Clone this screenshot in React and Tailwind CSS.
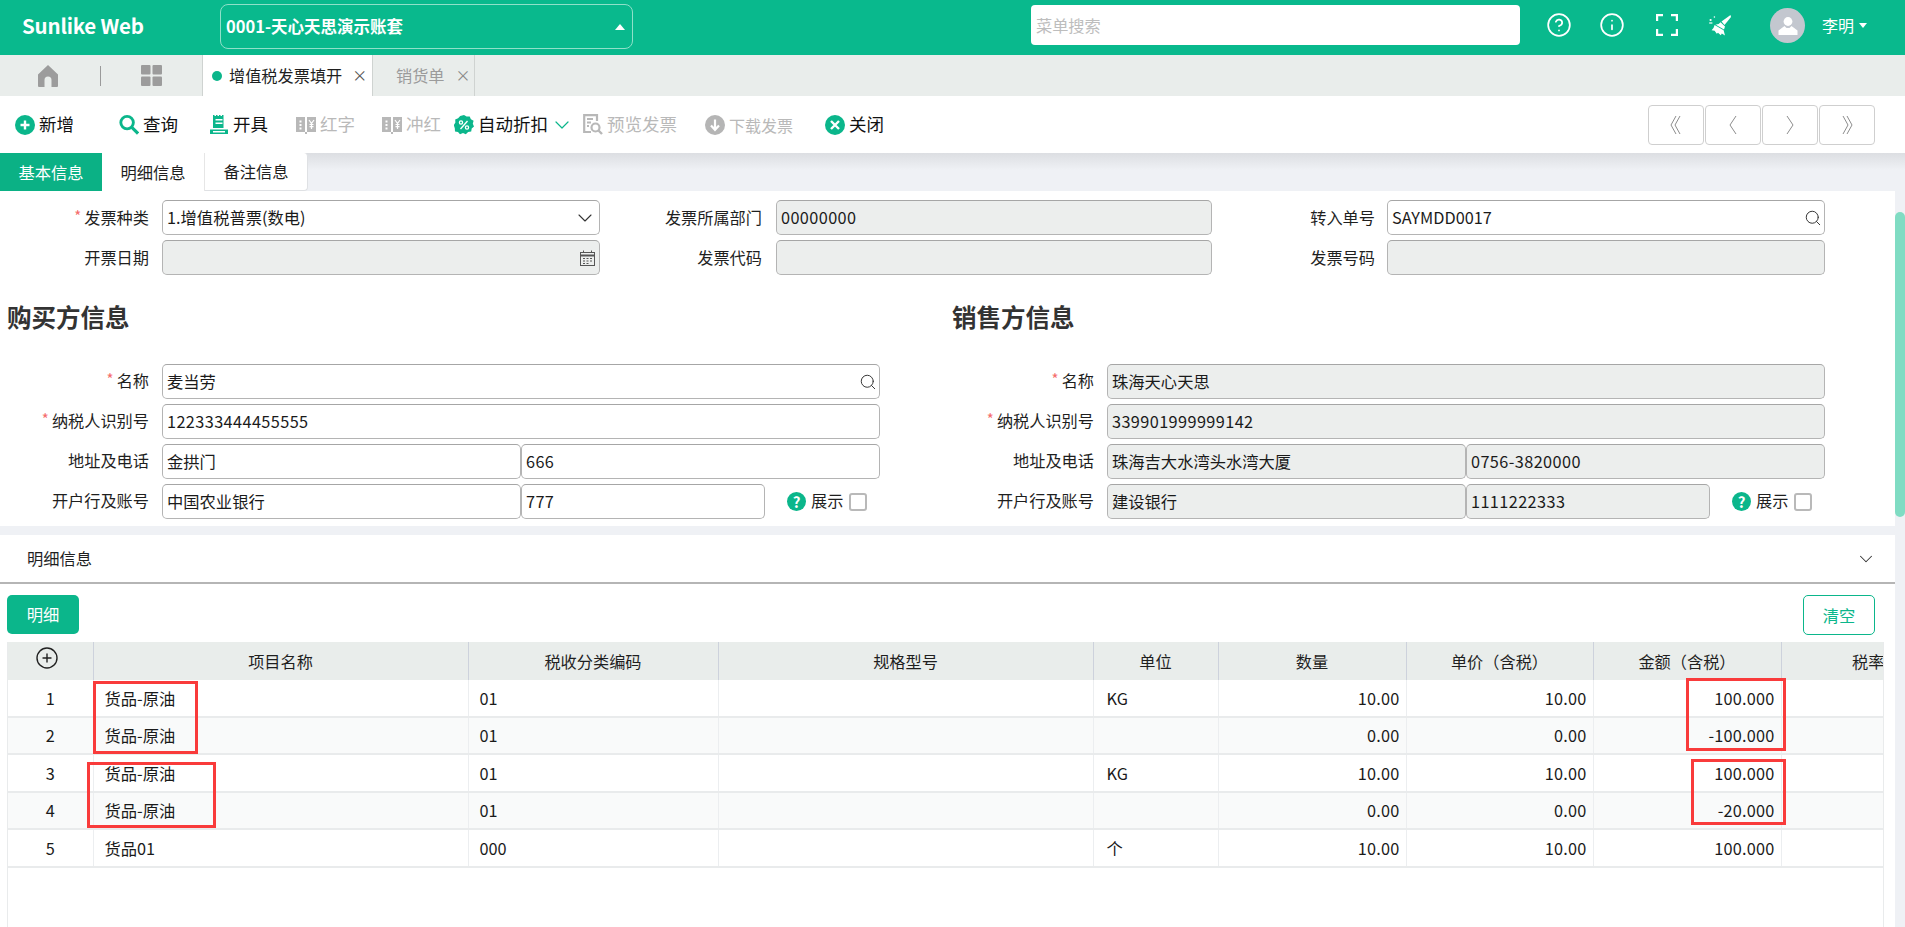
import React from "react";
import { ChevronDown, CirclePlus, Search, CircleHelp, Info } from "lucide-react";

const Home = () => (
  <svg width="20" height="22" viewBox="0 0 20 22" className="text-[#9c9c9c]"><path fill="currentColor" d="M10 0 L20 9.5 V21 a1 1 0 0 1-1 1 H13.5 V15 a3.5 3.5 0 0 0-7 0 V22 H1 a1 1 0 0 1-1-1 V9.5 Z" /></svg>
);
const Grid = () => (
  <svg width="21" height="21" viewBox="0 0 21 21" fill="#9c9c9c"><rect width="9.5" height="9.5" rx="1" /><rect x="11.5" width="9.5" height="9.5" rx="1" /><rect y="11.5" width="9.5" height="9.5" rx="1" /><rect x="11.5" y="11.5" width="9.5" height="9.5" rx="1" /></svg>
);
const Broom = () => (
  <svg width="23" height="22" viewBox="0 0 22 22" fill="white">
    <path d="M21.5 1 L12.5 7.6 L15.5 11 L22 3 Z" />
    <path d="M11.6 8.2 L16 12.6 L15 15.4 L6.4 10.4 Q9.5 10.8 11.6 8.2 Z" />
    <path d="M5.6 11 L14.6 16.2 L16 21.6 L12.8 19.6 L11.8 21.2 L9 18.8 L7.8 19.8 L5.6 16.8 L2.6 16.2 Q5 14.2 5.6 11 Z" />
    <circle cx="1.6" cy="6" r="1.1" /><circle cx="5.4" cy="3" r="0.8" /><path d="M0.2 8.4 h3.2 v1.2 h-3.2z" />
  </svg>
);
const Avatar = () => (
  <div className="w-[35px] h-[35px] rounded-full bg-[#c3c7cf] flex items-center justify-center">
    <svg width="20" height="20" viewBox="0 0 20 20" fill="white"><circle cx="10" cy="5.5" r="4.4" /><path d="M6.5 10 L8.5 12 H11.5 L13.5 10 L19.5 14.5 V19 H0.5 V14.5 Z" /></svg>
  </div>
);
const FillCircle = ({ color = "#0bb68b", children }) => (
  <svg width="20" height="20" viewBox="0 0 20 20"><circle cx="10" cy="10" r="10" fill={color} />{children}</svg>
);
const Plus = () => <FillCircle><path d="M10 5.5 V14.5 M5.5 10 H14.5" stroke="white" strokeWidth="2.4" /></FillCircle>;
const Close = () => <FillCircle><path d="M6 6 L14 14 M14 6 L6 14" stroke="white" strokeWidth="2.4" /></FillCircle>;
const Down = () => <FillCircle color="#b5b5b5"><path d="M10 4.5 V14.5 M6 10.5 L10 14.8 L14 10.5" stroke="white" strokeWidth="2.2" fill="none" /></FillCircle>;
const Find = () => (
  <svg width="21" height="21" viewBox="0 0 21 21" fill="none" stroke="#0bb68b"><circle cx="8.5" cy="8.5" r="6.6" strokeWidth="3" /><path d="M13.5 13.5 L20 20" strokeWidth="3.2" /></svg>
);
const Issue = () => (
  <svg width="18" height="19" viewBox="0 0 18 19" fill="#0bb68b">
    <path fillRule="evenodd" d="M3 0 h1.5 v1 h1.5 v-1 h1.5 v1 h1.5 v-1 h1.5 v1 h1.5 v-1 h1.5 V13 H3 Z M5.5 4 v1.4 h7 V4 Z M5.5 7.5 v1.4 h7 V7.5 Z" />
    <path d="M0 14.5 H18 V19 H0 Z M3 16 v1.4 h12 V16 Z" fillRule="evenodd" />
  </svg>
);
const Book = () => (
  <svg width="20" height="18" viewBox="0 0 20 18" fill="#b8b8b8">
    <path fillRule="evenodd" d="M0 1 H9 V16 H0 Z M3.5 4.5 v2 h2 v-2 Z M3.5 8 v2 h2 v-2 Z M3.5 11.5 v2 h2 v-2 Z" />
    <path d="M11 1 H20 V16 H11 Z" />
    <path d="M13 4 L15.5 7.5 L18 4 M15.5 7.5 V13 M13.5 8.5 H17.5 M13.5 10.7 H17.5" stroke="white" strokeWidth="1.2" fill="none" />
    <path d="M9 16 H11 V18 H9 Z" />
  </svg>
);
const Discount = () => (
  <svg width="20" height="20" viewBox="0 0 20 20">
    <path fill="#0bb68b" d="M10 0 L12.6 1.6 L15.7 1.4 L16.9 4.2 L19.6 5.7 L18.8 8.7 L20 11.5 L17.7 13.5 L17.2 16.6 L14.1 17 L11.8 19.2 L9 18 L6 19.2 L4 16.9 L1 16.4 L0.8 13.3 L-0.2 10 L1.4 7.4 L1.2 4.4 L4.1 3.3 L6.2 1 Z" />
    <circle cx="7" cy="7.5" r="1.6" fill="none" stroke="white" strokeWidth="1.3" /><circle cx="13" cy="12.5" r="1.6" fill="none" stroke="white" strokeWidth="1.3" />
    <path d="M13.5 6 L6.5 14" stroke="white" strokeWidth="1.4" />
  </svg>
);
const Preview = () => (
  <svg width="20" height="21" viewBox="0 0 20 21" fill="none" stroke="#b8b8b8">
    <path d="M8 18 H1.2 V1.2 H14 V7" strokeWidth="2.2" />
    <path d="M4 5 H10 M4 8.5 H8 M4 12 H6" strokeWidth="1.8" />
    <circle cx="12.5" cy="13.5" r="4" strokeWidth="2.2" /><path d="M15.5 16.5 L19 20" strokeWidth="2.4" />
  </svg>
);
const Cal = () => (
  <svg width="15" height="16" viewBox="0 0 15 16" fill="none" stroke="#555" className="mr-[3px]">
    <rect x="0.5" y="2.5" width="14" height="13" />
    <path d="M0.5 5.5 H14.5" strokeWidth="2" />
    <path d="M3.5 0.5 V3 M11.5 0.5 V3" />
    <path d="M3 8.5 H5 M6.5 8.5 H8.5 M10 8.5 H12 M3 11 H5 M6.5 11 H8.5 M10 11 H12 M3 13.5 H5 M6.5 13.5 H8.5" strokeWidth="1.2" />
  </svg>
);
const PageIcon = ({ d }) => (
  <svg width="14" height="20" viewBox="0 0 14 20" fill="none" stroke="#8d8d8d" strokeWidth="1"><path d={d} /></svg>
);

const Tool = ({ icon, label, className = "", disabled, text = "text-[17.5px]" }) => (
  <div className={`flex items-center gap-[4px] shrink-0 ${text} ${disabled ? "text-[#b9b9b9]" : "text-[#111]"} ${className}`}>
    <span className="flex w-[20px] justify-center">{icon}</span>
    <span>{label}</span>
  </div>
);

const Pager = ({ children }) => (
  <div className="w-[56px] h-[40px] rounded-[4px] border border-[#cfcfcf] flex items-center justify-center">{children}</div>
);

const Label = ({ children, req, w, pad = "pb-[2px]" }) => (
  <div className={`${w} h-full ${pad} flex items-center justify-end text-[16.2px] text-[#1f1f1f] shrink-0 whitespace-nowrap`}>
    {req && <span className="text-[#f56c6c] mr-[3px] text-[15px] relative top-[-1px]">*</span>}
    {children}
  </div>
);

const Input = ({ children, w, off, icon, pad = "pb-[1px]", className = "" }) => {
  const numeric = typeof children === "string" && /^[\d-]+$/.test(children);
  return (
    <div className={`${w} h-full shrink-0 rounded-[5px] border border-[#b4b4b4] border-t-[#a6a6a6] flex items-center justify-between pl-[4px] pr-[1px] text-[16.3px] text-[#1a1a1a] ${off ? "bg-[#eceeed]" : "bg-white"} ${className}`}>
      <span className={`whitespace-nowrap ${pad} ${numeric ? "tracking-[0.4px]" : ""}`}>{children}</span>
      {icon}
    </div>
  );
};

const Q = <Search size={18} strokeWidth={1.3} className="text-[#333] mr-[1px]" />;

const Party = ({ off, labelW, vals }) => (
  <div className="flex flex-col gap-[5px]">
    <div className="flex h-[35px]"><Label w={labelW} req>名称</Label><Input w="w-[718px] ml-[13px]" off={off} icon={off ? null : Q}>{vals[0]}</Input></div>
    <div className="flex h-[35px]"><Label w={labelW} req>纳税人识别号</Label><Input w="w-[718px] ml-[13px]" off={off}>{vals[1]}</Input></div>
    <div className="flex h-[35px]"><Label w={labelW}>地址及电话</Label><Input w="w-[359px] ml-[13px]" off={off}>{vals[2]}</Input><Input w="w-[359px]" off={off}>{vals[3]}</Input></div>
    <div className="flex h-[35px]">
      <Label w={labelW}>开户行及账号</Label><Input w="w-[359px] ml-[13px]" off={off}>{vals[4]}</Input><Input w="w-[244px]" off={off}>{vals[5]}</Input>
      <div className="ml-[22px] flex items-center text-[16.2px] text-[#1f1f1f]">
        <span className="w-[19px] h-[19px] rounded-full bg-[#0bb68b] text-white text-[15px] font-bold leading-[19px] text-center mr-[5px]">?</span>
        <span className="pb-[2px]">展示</span>
        <span className="ml-[6px] w-[18px] h-[18px] rounded-[3px] border-2 border-[#b9b9b9] bg-white" />
      </div>
    </div>
  </div>
);

const rows = [
  { n: 1, name: "货品-原油", code: "01", unit: "KG", q: "10.00", p: "10.00", a: "100.000", h: "h-[37px]" },
  { n: 2, name: "货品-原油", code: "01", unit: "", q: "0.00", p: "0.00", a: "-100.000", h: "h-[37px]", alt: true },
  { n: 3, name: "货品-原油", code: "01", unit: "KG", q: "10.00", p: "10.00", a: "100.000", h: "h-[38px]" },
  { n: 4, name: "货品-原油", code: "01", unit: "", q: "0.00", p: "0.00", a: "-20.000", h: "h-[37px]", alt: true },
  { n: 5, name: "货品01", code: "000", unit: "个", q: "10.00", p: "10.00", a: "100.000", h: "h-[38px]" },
];

const Th = ({ children }) => <th className="border-r border-[#cdd2dc] font-normal text-[16.2px] text-[#1f1f1f] text-center last:border-r-0 whitespace-nowrap overflow-hidden">{children}</th>;
const Td = ({ children, right, center, pl = "pl-[11px]" }) => (
  <td className={`border-r border-b-2 border-r-[#eceef0] border-b-[#e9ebec] text-[16.3px] text-[#1a1a1a] whitespace-nowrap ${right ? "text-right pr-[6px] tracking-[0.2px]" : center ? "text-center" : `text-left ${pl}`}`}>{children}</td>
);

const Mark = ({ className }) => <div className={`absolute border-[3px] border-[#f93b3b] pointer-events-none ${className}`} />;

export default function App() {
  return (
    <div className="relative w-[1905px] h-[927px] overflow-hidden flex flex-col bg-[#eff1f5] font-['Noto_Sans_CJK_SC','Noto_Sans',sans-serif]">
      {/* header */}
      <header className="h-[55px] shrink-0 bg-[#09b98d] flex items-center pb-[5px] text-white">
        <div className="w-[220px] pl-[22px] text-[20.5px] font-bold tracking-[-0.2px] pt-[1px]">Sunlike Web</div>
        <div className="w-[413px] h-[45px] mt-[3px] rounded-[8px] border border-[#8fe0c9] flex items-center justify-between pl-[5px] pr-[7px] text-[16.5px] font-bold">
          <span>0001-天心天思演示账套</span>
          <span className="w-0 h-0 border-x-[5px] border-x-transparent border-b-[6px] border-b-white" />
        </div>
        <div className="ml-[398px] w-[489px] h-[40px] bg-white rounded-[4px] flex items-center pl-[5px] text-[16.2px] text-[#bdbdbd]">菜单搜索</div>
        <div className="ml-[28px] w-[22px] flex justify-center"><CircleHelp size={26} strokeWidth={1.6} className="shrink-0" /></div>
        <div className="ml-[31px] w-[22px] flex justify-center"><Info size={26} strokeWidth={1.6} className="shrink-0" /></div>
        <div className="ml-[33px] w-[22px] flex justify-center">
          <svg width="22" height="22" viewBox="0 0 22 22" fill="none" stroke="white" strokeWidth="2.2"><path d="M1.1 7 V1.1 H7 M15 1.1 H20.9 V7 M20.9 15 V20.9 H15 M7 20.9 H1.1 V15" /></svg>
        </div>
        <div className="ml-[31px] w-[22px] flex justify-center"><Broom /></div>
        <div className="ml-[39px] mt-[1px]"><Avatar /></div>
        <div className="ml-[17px] text-[16px]">李明</div>
        <span className="ml-[5px] w-0 h-0 border-x-[4px] border-x-transparent border-t-[5px] border-t-white" />
      </header>

      {/* page tabs */}
      <div className="h-[41px] shrink-0 bg-[#e9edeb] flex items-stretch">
        <div className="w-[100px] flex items-center justify-center pr-[4px]"><Home /></div>
        <div className="w-px h-[20px] bg-[#9a9a9a] self-center" />
        <div className="w-[101px] flex items-center justify-center"><Grid /></div>
        <div className="w-[170px] bg-white border-l border-[#cfd3d1] flex items-center pl-[9px] text-[16.2px] text-[#1f1f1f]">
          <span className="w-[10px] h-[10px] rounded-full bg-[#0bb68b] mr-[7px]" />增值税发票填开
          <span className="ml-[10px] text-[15px] text-[#555]">×</span>
        </div>
        <div className="w-[103px] border-x border-[#cfd3d1] flex items-center pl-[23px] text-[16.2px] text-[#9b9b9b]">
          销货单<span className="ml-[11px] text-[15px] text-[#888]">×</span>
        </div>
      </div>

      {/* toolbar */}
      <div className="h-[57px] shrink-0 bg-white flex items-center pl-[15px]">
        <Tool icon={<Plus />} label="新增" />
        <Tool icon={<Find />} label="查询" className="ml-[45px]" />
        <Tool icon={<Issue />} label="开具" className="ml-[31px]" />
        <Tool icon={<Book />} label="红字" className="ml-[28px]" disabled />
        <Tool icon={<Book />} label="冲红" className="ml-[27px]" disabled />
        <Tool icon={<Discount />} label="自动折扣" className="ml-[13px]" />
        <ChevronDown size={24} strokeWidth={1.2} className="text-[#0bb68b] ml-[2px] shrink-0" />
        <Tool icon={<Preview />} label="预览发票" className="ml-[9px]" disabled />
        <Tool icon={<Down />} label="下载发票" className="ml-[28px]" disabled text="text-[16px]" />
        <Tool icon={<Close />} label="关闭" className="ml-[32px]" />
        <div className="ml-auto mr-[30px] flex gap-px">
          <Pager><PageIcon d="M7 1 L2 10 L7 19 M11 1 L6 10 L11 19" /></Pager>
          <Pager><PageIcon d="M10 1 L4 10 L10 19" /></Pager>
          <Pager><PageIcon d="M4 1 L10 10 L4 19" /></Pager>
          <Pager><PageIcon d="M3 1 L8 10 L3 19 M7 1 L12 10 L7 19" /></Pager>
        </div>
      </div>

      {/* form tabs */}
      <div className="h-[38px] shrink-0 flex bg-[linear-gradient(#dcdee2,#eff1f5_45%)]">
        <div className="w-[102px] bg-[#0bb185] text-white flex items-center justify-center text-[16.3px]">基本信息</div>
        <div className="w-[103px] bg-white border-r border-[#e6e6e6] flex items-center justify-center text-[16.3px] text-[#1f1f1f]">明细信息</div>
        <div className="w-[103px] bg-white rounded-br-[4px] rounded-tr-[4px] border-r border-b border-[#dfe1e4] flex items-center justify-center text-[16.3px] text-[#1f1f1f]">备注信息</div>
      </div>

      <div className="flex-1 min-h-0 flex">
        <div className="w-[1895px] flex flex-col">
          {/* upper form */}
          <section className="h-[335px] shrink-0 bg-white pt-[9px]">
            <div className="flex flex-col gap-[5px]">
              <div className="flex h-[35px]">
                <Label w="w-[149px]" req pad="pb-0">发票种类</Label>
                <Input w="w-[438px] ml-[13px]" pad="pb-0" icon={<ChevronDown size={24} strokeWidth={1.1} className="text-[#333] mr-[1px]" />}>1.增值税普票(数电)</Input>
                <Label w="w-[162px]" pad="pb-0">发票所属部门</Label>
                <Input w="w-[436px] ml-[14px]" off pad="pb-0">00000000</Input>
                <Label w="w-[163px]" pad="pb-0">转入单号</Label>
                <Input w="w-[438px] ml-[12px]" pad="pb-0" icon={Q}>SAYMDD0017</Input>
              </div>
              <div className="flex h-[35px]">
                <Label w="w-[149px]" pad="pb-0">开票日期</Label>
                <Input w="w-[438px] ml-[13px]" off icon={<Cal />} />
                <Label w="w-[162px]" pad="pb-0">发票代码</Label>
                <Input w="w-[436px] ml-[14px]" off />
                <Label w="w-[163px]" pad="pb-0">发票号码</Label>
                <Input w="w-[438px] ml-[12px]" off />
              </div>
            </div>
            <div className="flex h-[89px] pt-[27px] text-[24.5px] leading-[30px] font-bold text-[#333]">
              <div className="w-[952px] pl-[7px]">购买方信息</div>
              <div>销售方信息</div>
            </div>
            <div className="flex">
              <div className="w-[880px] shrink-0">
                <Party labelW="w-[149px]" vals={["麦当劳", "122333444455555", "金拱门", "666", "中国农业银行", "777"]} />
              </div>
              <Party off labelW="w-[214px]" vals={["珠海天心天思", "339901999999142", "珠海吉大水湾头水湾大厦", "0756-3820000", "建设银行", "1111222333"]} />
            </div>
          </section>

          <div className="h-[9px] shrink-0" />

          {/* details */}
          <section className="flex-1 min-h-0 bg-white flex flex-col">
            <div className="h-[49px] shrink-0 border-b-2 border-[#b5b5b5] flex items-center justify-between pl-[27px] pr-[18px] text-[16.3px] text-[#1f1f1f]">
              <span>明细信息</span>
              <ChevronDown size={22} strokeWidth={1.1} className="text-[#333]" />
            </div>
            <div className="flex justify-between pl-[7px] pr-[20px] pt-[11px] h-[58px] shrink-0">
              <div className="w-[72px] h-[39px] rounded-[5px] bg-[#0bb68b] text-white text-[16.3px] flex items-center justify-center">明细</div>
              <div className="w-[72px] h-[40px] rounded-[5px] bg-white border border-[#0bb68b] text-[#0bb68b] text-[16.3px] flex items-center justify-center">清空</div>
            </div>
            <div className="ml-[7px] w-[1877px] flex-1 min-h-0 overflow-hidden border-x border-[#e9ebec]">
              <table className="table-fixed border-collapse w-[1947px]">
                <colgroup>
                  <col className="w-[85px]" /><col className="w-[375px]" /><col className="w-[250px]" /><col className="w-[375px]" />
                  <col className="w-[125px]" /><col className="w-[188px]" /><col className="w-[187px]" /><col className="w-[188px]" /><col className="w-[174px]" />
                </colgroup>
                <thead>
                  <tr className="h-[38px] bg-[#e9edeb]">
                    <Th><CirclePlus size={24} strokeWidth={1.4} className="mx-auto text-[#222] relative top-[-3px] left-[-3px]" /></Th>
                    <Th>项目名称</Th><Th>税收分类编码</Th><Th>规格型号</Th><Th>单位</Th><Th>数量</Th><Th>单价（含税）</Th><Th>金额（含税）</Th><Th>税率</Th>
                  </tr>
                </thead>
                <tbody>
                  {rows.map((r) => (
                    <tr key={r.n} className={`${r.h} ${r.alt ? "bg-[#f9fafa]" : "bg-white"}`}>
                      <Td center>{r.n}</Td><Td>{r.name}</Td><Td>{r.code}</Td><Td /><Td pl="pl-[13px]">{r.unit}</Td>
                      <Td right>{r.q}</Td><Td right>{r.p}</Td><Td right>{r.a}</Td><Td />
                    </tr>
                  ))}
                </tbody>
              </table>
            </div>
          </section>
        </div>

        {/* scrollbar */}
        <div className="w-[10px] shrink-0">
          <div className="mt-[21px] h-[305px] rounded-[5px] bg-[#80dcc3]" />
        </div>
      </div>

      {/* red annotations over the picture */}
      <Mark className="left-[93px] top-[681px] w-[105px] h-[73px]" />
      <Mark className="left-[87px] top-[762px] w-[129px] h-[66px]" />
      <Mark className="left-[1686px] top-[678px] w-[100px] h-[73px]" />
      <Mark className="left-[1691px] top-[759px] w-[95px] h-[66px]" />
    </div>
  );
}
